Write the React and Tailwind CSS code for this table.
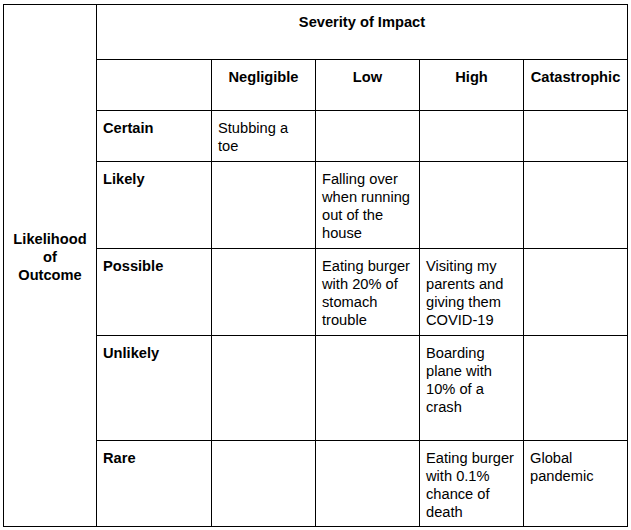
import React from "react";

const columns = ["Negligible", "Low", "High", "Catastrophic"];

const rows = [
  { label: "Certain", cells: ["Stubbing a toe", "", "", ""] },
  { label: "Likely", cells: ["", "Falling over when running out of the house", "", ""] },
  {
    label: "Possible",
    cells: ["", "Eating burger with 20% of stomach trouble", "Visiting my parents and giving them COVID-19", ""],
  },
  { label: "Unlikely", cells: ["", "", "Boarding plane with 10% of a crash", ""] },
  { label: "Rare", cells: ["", "", "Eating burger with 0.1% chance of death", "Global pandemic"] },
];

const cell = "bg-white pl-1.5 pr-1 pt-2";

export default function App() {
  return (
    <div className="min-h-screen bg-white pt-[4px] pl-[3px] text-black font-['Liberation_Sans',Arial,sans-serif] text-[14.67px] leading-[18px]">
      <div className="inline-grid grid-cols-[92px_114px_103px_103px_103px_103px] grid-rows-[54px_50px_50px_86px_86px_104px_85px] gap-px bg-black p-px">
        <div className="row-span-7 flex flex-col items-center justify-center bg-white pb-[18px] text-center font-bold">
          <span>Likelihood</span>
          <span>of</span>
          <span>Outcome</span>
        </div>
        <div className="col-span-5 bg-white pt-2 text-center font-bold">Severity of Impact</div>

        <div className="bg-white" />
        {columns.map((name) => (
          <div key={name} className="bg-white pt-2 text-center font-bold">
            {name}
          </div>
        ))}

        {rows.map((row) => (
          <React.Fragment key={row.label}>
            <div className={`${cell} font-bold`}>{row.label}</div>
            {row.cells.map((text, i) => (
              <div key={i} className={cell}>
                {text}
              </div>
            ))}
          </React.Fragment>
        ))}
      </div>
    </div>
  );
}
